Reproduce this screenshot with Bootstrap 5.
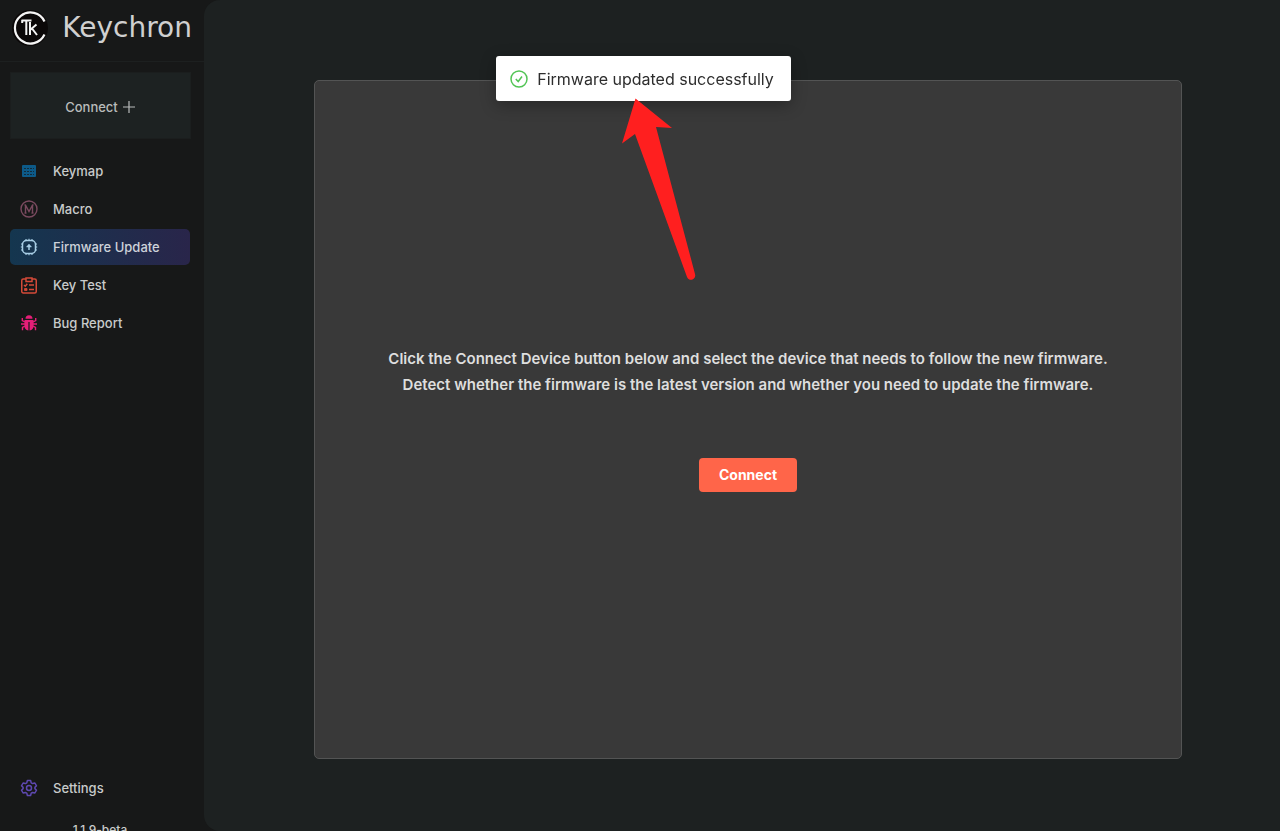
<!DOCTYPE html>
<html lang="en">
<head>
<meta charset="utf-8">
<meta name="viewport" content="width=device-width, initial-scale=1">
<title>Keychron</title>
<link href="https://cdn.jsdelivr.net/npm/bootstrap@5.3.0/dist/css/bootstrap.min.css" rel="stylesheet">
<style>
  body { font-family: Inter, "Liberation Sans", sans-serif; background: #171818; color: #c9cbcb; }
  .side { width: 204px; font-size: 13px; line-height: 20px; font-weight: 500; }
  .brand-row { height: 62px; padding: 0 12px 6px; border-bottom: 1px solid #1d2020; }
  .brand-name { font-family: "DejaVu Sans", sans-serif; font-weight: 400; font-size: 28px; line-height: 32px; color: #d0d0d0; }
  .add-device { margin: 10px 13px 0 10px; padding-top: 4px; height: 67px; background: #1d2222; color: #b9bcbc; border: 1px solid #1b1e1e; font-size: 13px; font-weight: 500; }
  .menu { margin: 14px 14px 0 10px; gap: 2px; }
  .menu-item { height: 36px; padding: 0 10px; gap: 15px; color: #c9cbcb; text-decoration: none; border-radius: 5px; }
  .menu-item.current { background: linear-gradient(90deg, #14364f, #29254a); color: #cdd2da; }
  .side-foot { margin: 0 14px -9px 10px; gap: 14px; }
  .version { font-size: 12px; line-height: 20px; }
  .stage { background: #1d2121; border-radius: 16px 0 0 16px; padding: 80px 98px 72px 110px; }
  .panel { background: #393939; border: 1px solid #535454; border-radius: 5px; padding-bottom: 2px; }
  .panel p { font-size: 15px; line-height: 26px; font-weight: 600; color: #dedede; margin-bottom: 60px; }
  .btn-coral { background: #ff6549; color: #fff; font-size: 14px; font-weight: 700; line-height: 20px; padding: 6px 19px; border-radius: 4px; }
  .btn-coral:hover { background: #f0583d; color: #fff; }
  .notice-layer { top: 56px; padding-left: 7px; pointer-events: none; }
  .notice { background: #fff; color: #2d2d2d; font-size: 16px; line-height: 24px; padding: 11px 17px 10px 14px; gap: 9px; border-radius: 3px; box-shadow: 0 4px 16px rgba(0,0,0,.3); }
  .pointer { left: 124px; top: 42px; }
</style>
</head>
<body>
<div class="d-flex vh-100 overflow-hidden">
  <aside class="side d-flex flex-column flex-shrink-0">
    <div class="brand-row d-flex align-items-center">
      <svg class="flex-shrink-0" width="36" height="36" viewBox="0 0 36 36" fill="none" stroke="#f4f4f4" aria-hidden="true">
        <circle cx="18" cy="18" r="18" fill="#0b0808" stroke="none"/>
        <path d="M32.500 11.500A15.500 15.500 0 1 0 32.500 24.500" stroke-width="2.200"/>
        <path d="M9.500 10.500H19.500M10.200 10V13M14.300 10.500V25M18 12V25M18 20L24.500 14.500M20 18.500L25 25" stroke-width="2"/>
      </svg>
      <span class="brand-name ms-auto">Keychron</span>
    </div>
    <button type="button" class="add-device d-flex align-items-center justify-content-center gap-1">
      Connect
      <svg width="14" height="14" viewBox="0 0 14 14" stroke="#b9bcbc" stroke-width="1.200" aria-hidden="true"><path d="M7 1V13M1 7H13"/></svg>
    </button>
    <nav class="menu d-flex flex-column">
      <a href="#" class="menu-item d-flex align-items-center">
        <svg width="18" height="18" viewBox="0 0 18 18" aria-hidden="true"><rect x="2" y="3" width="14" height="12" rx="1" fill="#0d5a88"/><path d="M4 6.500H14M4 9.500H14M4 12.500H14" stroke="#132b3a" stroke-width="1.200" stroke-dasharray="2 1"/></svg>
        Keymap
      </a>
      <a href="#" class="menu-item d-flex align-items-center">
        <svg width="18" height="18" viewBox="0 0 18 18" fill="none" stroke="#7a4a5f" stroke-width="1.400" aria-hidden="true"><circle cx="9" cy="9" r="8"/><path d="M4.500 13H6.500M5.500 13V5L9 11.500L12.500 5V13M11.500 13H13.500M4.500 5H5.700M12.300 5H13.500"/></svg>
        Macro
      </a>
      <a href="#" class="menu-item current d-flex align-items-center" aria-current="page">
        <svg width="18" height="18" viewBox="0 0 18 18" fill="none" stroke="#a9cfe6" stroke-width="1.500" aria-hidden="true"><rect x="2.500" y="2.500" width="13" height="13" rx="4"/><path d="M6 1V3M9 .800V3M12 1V3M6 15V17M9 15V17.200M12 15V17M1 6H3M.800 9H3M1 12H3M15 6H17M15 9H17.200M15 12H17" stroke-width="1.100"/><path d="M9 12V7"/><path d="M6.500 9L9 6L11.500 9Z" fill="#a9cfe6" stroke-width=".500"/></svg>
        Firmware Update
      </a>
      <a href="#" class="menu-item d-flex align-items-center">
        <svg width="18" height="18" viewBox="0 0 18 18" fill="none" stroke="#d54a38" stroke-width="1.500" aria-hidden="true"><rect x="1.750" y="3" width="14.500" height="14" rx="1.500"/><path d="M6 5.500V2H12V5.500Z" fill="#171818"/><path d="M4 9L5.300 10.200L7.300 7.800M9 9H14M9 13.500H14"/><path d="M4.500 12.500H7V14.500H4.500Z" fill="#d54a38" stroke-width=".800"/></svg>
        Key Test
      </a>
      <a href="#" class="menu-item d-flex align-items-center">
        <svg width="18" height="18" viewBox="0 0 18 18" aria-hidden="true"><path d="M5.500 4.800A3.500 3.500 0 0 1 12.500 4.800ZM4.500 6H13.500V12A4.500 4.500 0 0 1 9.600 16.500V8H8.400V16.500A4.500 4.500 0 0 1 4.500 12Z" fill="#e61e78"/><path d="M5 8L2.300 6.500V4M13 8L15.700 6.500V4M1 10H5M13 10H17M5 12L2.500 13.500V16.200M13 12L15.500 13.500V16.200" fill="none" stroke="#e61e78" stroke-width="1.400"/></svg>
        Bug Report
      </a>
    </nav>
    <div class="side-foot mt-auto d-flex flex-column">
      <a href="#" class="menu-item d-flex align-items-center">
        <svg width="18" height="18" viewBox="0 0 18 18" fill="none" stroke="#5e48b0" stroke-width="1.500" stroke-linejoin="round" aria-hidden="true"><path d="M7.400 1.500H10.600L11.200 3.800L12.600 4.600L14.900 4L16.500 6.800L14.900 8.400V9.600L16.500 11.200L14.900 14L12.600 13.400L11.200 14.200L10.600 16.500H7.400L6.800 14.200L5.400 13.400L3.100 14L1.500 11.200L3.100 9.600V8.400L1.500 6.800L3.100 4L5.400 4.600L6.800 3.800Z"/><circle cx="9" cy="9" r="2.500"/></svg>
        Settings
      </a>
      <div class="version text-center">1.1.9-beta</div>
    </div>
  </aside>

  <main class="stage flex-grow-1 d-flex">
    <section class="panel flex-grow-1 d-flex flex-column align-items-center justify-content-center text-center">
      <p>Click the Connect Device button below and select the device that needs to follow the new firmware.<br>Detect whether the firmware is the latest version and whether you need to update the firmware.</p>
      <button type="button" class="btn btn-coral">Connect</button>
    </section>
  </main>
</div>

<div class="notice-layer position-fixed start-0 end-0 d-flex justify-content-center">
  <div class="notice position-relative d-flex align-items-center" role="status">
    <svg width="18" height="18" viewBox="0 0 18 18" fill="none" stroke="#52c455" stroke-width="1.500" aria-hidden="true"><circle cx="9" cy="9" r="8"/><path d="M5.800 9L8.200 11.500L12 6.500"/></svg>
    Firmware updated successfully
    <svg class="pointer position-absolute" width="80" height="184" viewBox="0 0 80 184" aria-hidden="true"><path d="M15.500 .500L52 30L36 29L75 176A4.200 4.200 0 0 1 67 179L15 36L2 45.500Z" fill="#ff1f1f"/></svg>
  </div>
</div>
<script src="https://cdn.jsdelivr.net/npm/bootstrap@5.3.0/dist/js/bootstrap.bundle.min.js"></script>
</body>
</html>
